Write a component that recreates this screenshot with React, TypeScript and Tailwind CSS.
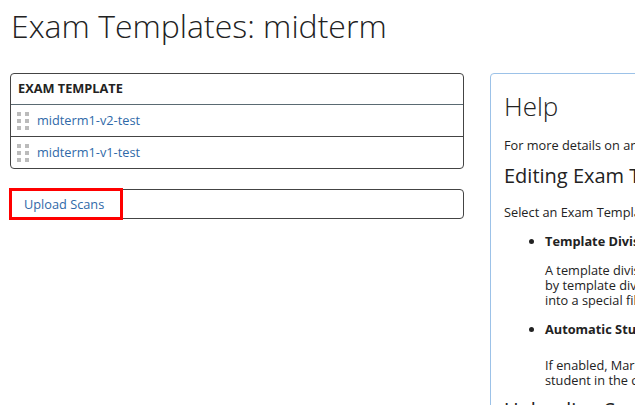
export default function App() {
  return (
    <div className="w-screen h-screen overflow-hidden bg-white text-[#222] font-['Open_Sans',sans-serif]">
      <div className="w-[944px] px-[10px]">
        <h1 className="text-[32px] font-light leading-[40px] pt-[6px] pl-px">Exam Templates: midterm</h1>

        <div className="grid grid-cols-[454px_454px] gap-[26px] mt-[27px]">
          <div>
            <div className="border border-[#444] rounded-[4px] text-[12.75px]">
              <div className="h-[31px] flex items-center px-[7px] font-bold uppercase border-b border-[#5a6a72]">
                Exam Template
              </div>
              <div className="h-[32px] flex items-center border-b border-[#444]">
                <Handle />
                <a className="text-[#2f69a8]">midterm1-v2-test</a>
              </div>
              <div className="h-[31px] flex items-center">
                <Handle />
                <a className="text-[#2f69a8]">midterm1-v1-test</a>
              </div>
            </div>

            <div className="relative mt-[20px] h-[30px] border border-[#444] rounded-[4px] flex items-center pl-[13px] text-[12.75px]">
              <a className="text-[#2f69a8] mt-px">Upload Scans</a>
              <span className="absolute -left-[2px] -top-[2px] w-[114px] h-[32px] border-[3px] border-[#f00]" />
            </div>
          </div>

          <div className="border border-[#9cc2e8] rounded-[4px] px-[13px] pt-[14px] h-[400px] text-[12.75px]">
            <h2 className="text-[26px] font-light leading-[36px]">Help</h2>
            <p className="mt-[12px]">For more details on any of the features below, see the documentation.</p>
            <h3 className="text-[20px] leading-[26px] mt-[8px]">Editing Exam Templates</h3>
            <p className="mt-[14px]">Select an Exam Template from the list to edit its settings.</p>
            <ul className="mt-[10px] pl-[41px] list-disc">
              <li className="font-bold">Template Divisions</li>
            </ul>
            <div className="pl-[41px] mt-[12px] leading-[15px] whitespace-nowrap">
              A template division splits each scanned exam into parts
              <br />
              by template division pages, and each part is placed
              <br />
              into a special file for grading.
            </div>
            <ul className="mt-[12px] pl-[41px] list-disc">
              <li className="font-bold">Automatic Student Matching</li>
            </ul>
            <div className="pl-[41px] mt-[18px] leading-[15px] whitespace-nowrap">
              If enabled, MarkUs will attempt to match each exam to a
              <br />
              student in the course using the scanned student ID.
            </div>
            <h3 className="text-[20px] leading-[26px] mt-[9px]">Uploading Scans</h3>
          </div>
        </div>
      </div>
    </div>
  );
}

function Handle() {
  return (
    <span className="grid grid-cols-[4px_4px] gap-x-[4px] gap-y-[3px] ml-[6px] mr-[8px]">
      {[0, 1, 2, 3, 4, 5].map((i) => (
        <span key={i} className="w-[4px] h-[4px] bg-[#bbb]" />
      ))}
    </span>
  );
}
